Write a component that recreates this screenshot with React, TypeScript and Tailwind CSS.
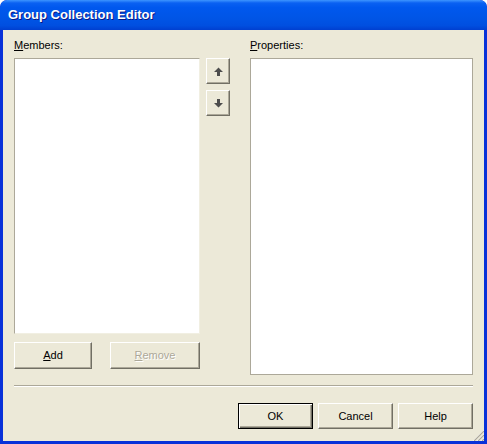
import type { ReactNode } from 'react'

const ui = { fontFamily: '"Liberation Sans", Arial, sans-serif' }

function Btn({ children, w, def, disabled }: { children: ReactNode; w: string; def?: boolean; disabled?: boolean }) {
  const edge = def
    ? 'border border-black shadow-[inset_1px_1px_0_#fff,inset_-1px_-1px_0_#716f64,inset_-2px_-2px_0_#aca899]'
    : 'border border-t-white border-l-white border-r-[#716f64] border-b-[#716f64] shadow-[inset_-1px_-1px_0_#aca899]'
  return <button className={`${w} flex items-center justify-center bg-[#ece9d8] text-[11px] ${edge} ${disabled ? 'text-[#aca899] [text-shadow:1px_1px_0_#fff]' : 'text-black'}`}>{children}</button>
}

function Arrow({ down }: { down?: boolean }) {
  return <svg width="9" height="9" viewBox="0 0 9 9" className={down ? 'rotate-180' : ''}>
    <path d="M4.5 0.5 L9 5 H6 V9 H3 V5 H0 Z" fill="#4d4d4d" />
  </svg>
}

export default function App() {
  return <div className="w-[487px] h-[444px] flex flex-col rounded-t-[7px] bg-[#0831d9] overflow-hidden" style={ui}>
    <div className="h-[30px] shrink-0 flex items-center pl-[8px] rounded-t-[7px] bg-[linear-gradient(to_bottom,#3d95ff_0%,#0a61f2_10%,#0058ee_25%,#0055e6_60%,#004fe0_85%,#003fd0_100%)]">
      <span className="text-white font-bold text-[13px] [text-shadow:1px_1px_0_#0a1883]">Group Collection Editor</span>
    </div>
    <div className="relative flex-1 mx-[3px] mb-[3px] bg-[#ece9d8] px-[11px] pt-[9px] text-black text-[11px]">
      <div className="flex">
        <div className="w-[186px] flex flex-col">
          <div className="h-[19px] leading-[13px]"><u>M</u>embers:</div>
          <div className="h-[276px] bg-white border border-t-[#aca899] border-l-[#aca899] border-r-[#f1efe2] border-b-[#f1efe2]" />
          <div className="flex mt-[8px] h-[27px] gap-[18px]">
            <Btn w="w-[78px]"><span><u>A</u>dd</span></Btn>
            <Btn w="w-[90px]" disabled><span><u>R</u>emove</span></Btn>
          </div>
        </div>
        <div className="ml-[6px] w-[24px] pt-[19px] flex flex-col gap-[6px]">
          <Btn w="w-[24px] h-[26px]"><Arrow /></Btn>
          <Btn w="w-[24px] h-[26px]"><Arrow down /></Btn>
        </div>
        <div className="ml-[20px] w-[223px] flex flex-col">
          <div className="h-[19px] leading-[13px]"><u>P</u>roperties:</div>
          <div className="h-[317px] bg-white border border-[#aca899]" />
        </div>
      </div>
      <div className="mt-[10px] border-t border-t-[#aca899] border-b border-b-white" />
      <div className="mt-[16px] flex justify-end gap-[5px] h-[26px]">
        <Btn w="w-[75px]" def>OK</Btn>
        <Btn w="w-[75px]">Cancel</Btn>
        <Btn w="w-[75px]">Help</Btn>
      </div>
      <svg className="absolute right-0 bottom-0" width="12" height="12" viewBox="0 0 12 12">
        {[0, 4, 8].map(o => <g key={o}>
          <line x1={12 - (11 - o)} y1="12" x2="12" y2={12 - (11 - o)} stroke="#fff" strokeWidth="1" />
          <line x1={12 - (10 - o)} y1="12" x2="12" y2={12 - (10 - o)} stroke="#aca899" strokeWidth="1.2" />
        </g>)}
      </svg>
    </div>
  </div>
}
